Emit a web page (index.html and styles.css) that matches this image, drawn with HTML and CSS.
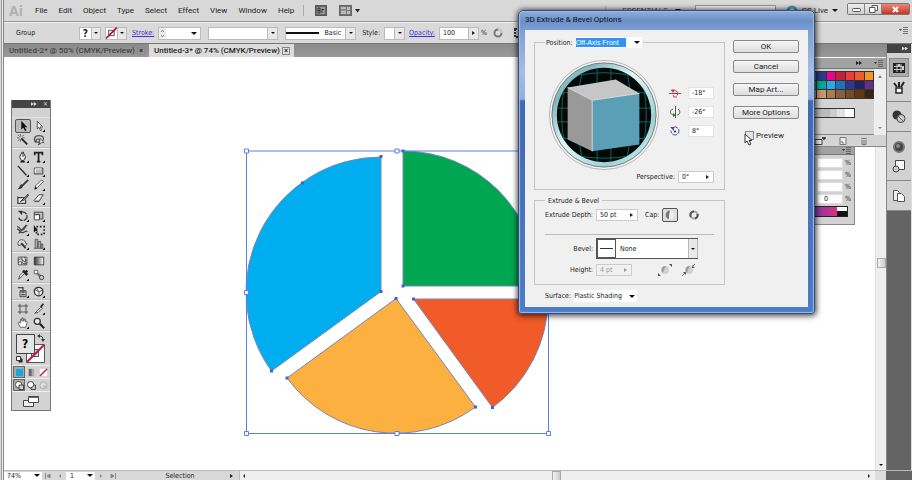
FILE: index.html
```
<!DOCTYPE html>
<html lang="en">
  <head>
    <meta charset="utf-8">
    <title>Untitled-3 - Illustrator</title>
    <link rel="stylesheet" href="styles.css">
  </head>
  <body>
    <header class="menubar">
      <span class="logo">Ai</span>
      <nav class="menu">
        <a href="#">File</a>
        <a href="#">Edit</a>
        <a href="#">Object</a>
        <a href="#">Type</a>
        <a href="#">Select</a>
        <a href="#">Effect</a>
        <a href="#">View</a>
        <a href="#">Window</a>
        <a href="#">Help</a>
      </nav>
      <div class="app_buttons">
        <button class="plain" aria-label="Bridge"><svg width="12" height="11" viewBox="0 0 12 11"><rect x=".5" y=".5" width="11" height="10" fill="#666" stroke="#555"/><rect x="2" y="2" width="8" height="7" fill="#999"/><path d="M3 3v5h2v-5zM3 5.500h2M7 8V4.500h2" fill="none" stroke="#333"/></svg></button>
        <button class="plain" aria-label="Arrange documents"><svg width="21" height="11" viewBox="0 0 21 11"><rect x=".5" y=".5" width="12" height="10" fill="#777" stroke="#666"/><path d="M2 2h5v7H2zM8 2h3v3H8zM8 6h3v3H8z" fill="#bbb"/><path d="M2 5h5" stroke="#666"/><path d="M16 4h5l-2.500 3.500z" fill="#222"/></svg></button>
      </div>
      <button class="workspace_name">ESSENTIALS <i class="arrow"></i></button>
      <input class="search" type="search" aria-label="Search">
      <button class="live"><svg width="12" height="12" viewBox="0 0 12 12"><circle cx="6" cy="6" r="4" fill="#eee" stroke="#3d9cab" stroke-width="3"/></svg>CS Live <i class="arrow"></i></button>
      <div class="window_buttons">
        <button aria-label="Minimize"><svg width="9" height="7" viewBox="0 0 9 7"><rect x=".5" y="2.500" width="8" height="3" rx="1" fill="#fff" stroke="#555"/></svg></button>
        <button aria-label="Restore"><svg width="9" height="8" viewBox="0 0 9 8"><path d="M3 .5h5.500v5H3z" fill="#fff" stroke="#555"/><path d="M.5 2.500H6v5H.5z" fill="#fff" stroke="#555"/></svg></button>
        <button class="quit" aria-label="Quit"><svg width="9" height="7" viewBox="0 0 9 7"><path d="M2 1l5 5M7 1L2 6" stroke="#fff" stroke-width="2"/></svg></button>
      </div>
    </header>

    <div class="control_bar">
      <span class="kind">Group</span>
      <button class="field paint" aria-label="Fill"><b>?</b><span class="drop"><i class="arrow"></i></span></button>
      <button class="field paint" aria-label="Stroke color"><svg width="12" height="12" viewBox="0 0 12 12"><rect x="3" y="3" width="6" height="6" fill="#fff" stroke="#444"/><path d="M0 12L12 0" stroke="#b01545" stroke-width="2"/></svg><span class="drop"><i class="arrow"></i></span></button>
      <a href="#">Stroke:</a>
      <label class="field stroke"><svg class="stepper" width="7" height="11" viewBox="0 0 7 11"><path d="M0 0h7v11H0z" fill="#eee"/><path d="M2 4l1.500-2L5 4M2 7l1.500 2L5 7" fill="none" stroke="#888"/></svg><select aria-label="Stroke weight"><option></option></select><i class="arrow"></i></label>
      <button class="field profile" aria-label="Width profile"><span class="drop"><i class="arrow"></i></span></button>
      <button class="field brush"><i class="line"></i>Basic<span class="drop"><i class="arrow"></i></span></button>
      <span>Style:</span>
      <button class="field style" aria-label="Graphic style"><span class="drop"><i class="arrow"></i></span></button>
      <a href="#">Opacity:</a>
      <label class="field opacity"><input value="100" aria-label="Opacity"><span class="drop"><i class="arrow right"></i></span></label>
      <span class="percent">%</span>
      <svg class="recolor" width="10" height="10" viewBox="0 0 10 10"><circle cx="5" cy="5" r="3.500" fill="#ddd" stroke="#777" stroke-width="2"/><path d="M5 1.500A3.500 3.500 0 0 1 8.500 5" fill="none" stroke="#ccc" stroke-width="2"/></svg>
      <svg width="10" height="10" viewBox="0 0 10 10"><path d="M1 1h8v8H1z" fill="none" stroke="#333" stroke-width="2" stroke-dasharray="2 1"/><path d="M4 4h3v3H4z" fill="#555"/></svg>
      <button class="plain panel_menu" aria-label="Panel menu"><svg width="9" height="7" viewBox="0 0 9 7"><path d="M0 2h3L1.500 4z" fill="#444"/><path d="M4 .5h5M4 2.500h5M4 4.500h5M4 6.500h5" stroke="#777"/></svg></button>
    </div>

    <main class="workspace">
      <div class="documents">
        <div class="tabs">
          <div class="tab"><a href="#">Untitled-2* @ 50% (CMYK/Preview)</a><button aria-label="Close">×</button></div>
          <div class="tab active"><a href="#">Untitled-3* @ 74% (CMYK/Preview)</a><button aria-label="Close">×</button></div>
        </div>
        <div class="canvas">
          <svg class="chart" width="310" height="291" viewBox="242 147 310 291">
            <g stroke="#7a87b4">
              <path fill="#00aeef" d="M381 157A135 135 0 0 0 271.500 371L381 291.500z"/>
              <path fill="#00a651" d="M403 151V286H538A135 135 0 0 0 403 151z"/>
              <path fill="#f15a29" d="M413.500 299H548A135 135 0 0 1 492.500 407.500z"/>
              <path fill="#fbb040" d="M396 298.500L475.500 407A134.500 134.500 0 0 1 287 378z"/>
            </g>
            <rect x="246.500" y="151" width="302" height="282.500" fill="none" stroke="#5c7fe0"/>
            <path fill="#3c62d8" d="M379.500 155h3v3h-3zM379.500 290h3v3h-3zM270 369.500h3v3h-3zM301 181.500h3v3h-3zM401.500 149.500h3v3h-3zM401.500 284.500h3v3h-3zM412 297.500h3v3h-3zM491 406h3v3h-3zM394.500 297h3v3h-3zM474 405.500h3v3h-3zM285.500 376.500h3v3h-3z"/>
            <path fill="#fff" stroke="#5c7fe0" d="M244.500 149h4v4h-4zM395 149h4v4h-4zM244.500 290.500h4v4h-4zM244.500 431.500h4v4h-4zM395 431.500h4v4h-4zM546.500 431.500h4v4h-4z"/>
          </svg>

          <aside class="toolbox">
            <div class="toolbox_title"><i class="fast"></i><i>×</i></div>
            <div class="grip"></div>
            <div class="tools">
              <button class="on" aria-label="Selection"><svg viewBox="0 0 14 14"><path d="M5 1v10l2.500-2 2 4 1.500-1-2-3.500h3z" fill="#111"/></svg></button>
              <button aria-label="Direct selection"><svg viewBox="0 0 14 14"><path d="M5 1.500v9l2-2 2 4 1-1-1.500-3.500h3z" fill="#fff" stroke="#444"/><path d="M14 11v3h-3z"/></svg></button>
              <button aria-label="Magic wand"><svg viewBox="0 0 14 14"><path d="M5 5l7 7" stroke="#222" stroke-width="2"/><path d="M4 0v3M4 6v3M0 4.500h3M6 4.500h3M1 1l2 2M8 1L6 3M1 8l2-2" stroke="#555"/></svg></button>
              <button aria-label="Lasso"><svg viewBox="0 0 14 14"><path d="M4 10C0 8 1 2 7 2s7 5 2 7-7-2-4-3 4 4 1 7" fill="none" stroke="#555" stroke-width="1.500"/><path d="M8 5v7l2-2h3z" fill="#fff" stroke="#444"/></svg></button>
            </div>
            <div class="tools">
              <button aria-label="Pen"><svg viewBox="0 0 14 14"><path d="M6 1L3 7l2 4h3l2-4-3-6v6" fill="#eee" stroke="#222"/><path d="M4 12.500h5" stroke="#222" stroke-width="2"/><path d="M14 11v3h-3z"/></svg></button>
              <button aria-label="Type"><svg viewBox="0 0 14 14"><path d="M2 5V2h9v3M6.500 2v10M4.500 12.500h4" fill="none" stroke="#222" stroke-width="2"/><path d="M14 11v3h-3z"/></svg></button>
              <button aria-label="Line"><svg viewBox="0 0 14 14"><path d="M1 1l10 11" stroke="#222" stroke-width="1.500"/><path d="M14 11v3h-3z"/></svg></button>
              <button aria-label="Rectangle"><svg viewBox="0 0 14 14"><path d="M1.500 3.500h10v7h-10z" fill="#bbb" stroke="#333"/><path d="M2.500 9V4.500H10" fill="none" stroke="#fff"/><path d="M14 11v3h-3z"/></svg></button>
              <button aria-label="Paintbrush"><svg viewBox="0 0 14 14"><path d="M13 1L6 8" stroke="#333" stroke-width="2"/><path d="M7 7c0 4-3 5-7 5 3-1 3-5 5-6z" fill="#333"/></svg></button>
              <button aria-label="Pencil"><svg viewBox="0 0 14 14"><path d="M2 12l1-4 7-7 2 2-7 7z" fill="#fff" stroke="#333"/><path d="M2 12l1-3 2 2zM14 11v3h-3z"/></svg></button>
              <button aria-label="Blob brush"><svg viewBox="0 0 14 14"><path d="M1 5.500h7M1 4v8h9V8" fill="#eee" stroke="#444" stroke-width="1.500"/><path d="M13 1L7 7 4 10l5-2 5-6" fill="#888" stroke="#333"/></svg></button>
              <button aria-label="Eraser"><svg viewBox="0 0 14 14"><path d="M1 9l6-7h5l-5 8H2z" fill="#eee" stroke="#333"/><path d="M2 9h5l4-6" fill="none" stroke="#888"/><path d="M14 11v3h-3z"/></svg></button>
            </div>
            <div class="tools">
              <button aria-label="Rotate"><svg viewBox="0 0 14 14"><path d="M4 3a5 5 0 1 1-2 6" fill="none" stroke="#444" stroke-width="1.500" stroke-dasharray="8 1"/><path d="M1 1h5v5z" fill="#333"/><path d="M14 11v3h-3z"/></svg></button>
              <button aria-label="Scale"><svg viewBox="0 0 14 14"><path d="M1.500 2.500h10v8h-4v-5h-6z" fill="#bbb" stroke="#333"/><path d="M1.500 5.500h6v6h-6z" fill="#fff" stroke="#333"/><path d="M14 11v3h-3z"/></svg></button>
              <button aria-label="Warp"><svg viewBox="0 0 14 14"><path d="M0 3c4 0 2 4 6 4s3-6 6-5M0 6c4 0 3 5 7 4s3-3 5-1M2 11L11 1" fill="none" stroke="#444" stroke-width="1.500"/><path d="M14 11v3h-3z"/></svg></button>
              <button aria-label="Free transform"><svg viewBox="0 0 14 14"><path d="M4 3h9v9H4z" fill="none" stroke="#222" stroke-width="2" stroke-dasharray="2 2"/><path d="M1 1v9l2-2 3 1z" fill="#111"/></svg></button>
              <button aria-label="Symbol sprayer"><svg viewBox="0 0 14 14"><path d="M1 7c0-7 9-6 9-1l2 1-3 3-2-3-5 2z" fill="#ddd" stroke="#444"/><path d="M5 6l5 6" stroke="#333" stroke-width="2"/><path d="M14 11v3h-3z"/></svg></button>
              <button aria-label="Graph"><svg viewBox="0 0 14 14"><path d="M2.500 12V1.500h3V12M6 12V4h3v8M9.500 12V7h2v5M1 12h11" fill="#aaa" stroke="#555"/><path d="M14 11v3h-3z"/></svg></button>
            </div>
            <div class="tools">
              <button aria-label="Mesh"><svg viewBox="0 0 14 14"><path d="M1.500 2.500h10v9h-10zM1 6q3-3 5 0t6 0M1 9q3-3 5 0t6 0M5 2q3 4 0 9M9 2q2 4 0 9" fill="#eee" stroke="#444"/></svg></button>
              <button aria-label="Gradient"><svg viewBox="0 0 14 14"><defs><linearGradient id="fade"><stop stop-color="#333"/><stop offset="1" stop-color="#fff"/></linearGradient></defs><path d="M1.500 2.500h11v9h-11z" fill="url(#fade)" stroke="#333"/></svg></button>
              <button aria-label="Eyedropper"><svg viewBox="0 0 14 14"><path d="M9 5l-7 7 1-4 5-5" fill="#fff" stroke="#333"/><path d="M7 2l5 5M10 4l2-2" stroke="#222" stroke-width="3"/><path d="M14 11v3h-3z"/></svg></button>
              <button aria-label="Blend"><svg viewBox="0 0 14 14"><path d="M1.500 1.500h4v4h-4z" fill="#fff" stroke="#555"/><path d="M5 5l4 4" stroke="#777" stroke-width="3"/><circle cx="10" cy="10" r="2.500" fill="#ccc" stroke="#333"/></svg></button>
            </div>
            <div class="tools">
              <button aria-label="Live paint"><svg viewBox="0 0 14 14"><path d="M3.500 5.500h7v7h-7z" fill="#ccc" stroke="#333"/><path d="M1 2h6v3M5 7h4M5 10h4" fill="none" stroke="#444" stroke-width="1.500"/><path d="M14 11v3h-3z"/></svg></button>
              <button aria-label="Perspective"><svg viewBox="0 0 14 14"><circle cx="6.500" cy="6.500" r="5" fill="#eee" stroke="#333" stroke-width="1.500"/><path d="M2 4l5 3 5-3M7 7v5M4 2l3 5" fill="none" stroke="#555"/><path d="M14 11v3h-3z"/></svg></button>
            </div>
            <div class="tools">
              <button aria-label="Artboard"><svg viewBox="0 0 14 14"><path d="M3.500 1v12M10.500 1v12M1 3.500h12M1 10.500h12" stroke="#444"/></svg></button>
              <button aria-label="Slice"><svg viewBox="0 0 14 14"><path d="M2 12L9 5l2 1-5 5z" fill="#fff" stroke="#333"/><path d="M9 5l3-4" stroke="#222" stroke-width="2"/><path d="M14 11v3h-3z"/></svg></button>
              <button aria-label="Hand"><svg viewBox="0 0 14 14"><path d="M4 12L1 7l1-1 2 1V3l1-1 1 3V1h1l1 4 1-3 1 1v3l1-1 1 1-2 6z" fill="#fff" stroke="#555"/><path d="M14 11v3h-3z"/></svg></button>
              <button aria-label="Zoom"><svg viewBox="0 0 14 14"><circle cx="5" cy="5" r="3.500" fill="#eee" stroke="#333" stroke-width="1.500"/><path d="M8 8l5 5" stroke="#222" stroke-width="2.500"/></svg></button>
            </div>
            <svg class="fill_stroke" width="32" height="33" viewBox="0 0 32 33">
              <path d="M11.500 12.500h18v18h-18z" fill="#fff" stroke="#555"/><path d="M16.500 17.500h7v7h-7z" fill="#ddd" stroke="#555"/>
              <path d="M12 30L29 13" stroke="#c01543" stroke-width="2"/>
              <path d="M1.500 2.500h18v19h-18z" fill="#e4e4e4" stroke="#444"/>
              <text x="7" y="16">?</text>
              <path d="M24 4c3 0 4 1 4 4" fill="none" stroke="#333"/><path d="M22 4l3-2v4zM28 10l-2-3h4z" fill="#333"/>
              <path d="M3.500 26.500h4v4h-4z" fill="#222"/><path d="M1.500 24.500h4v4h-4z" fill="#fff" stroke="#333"/>
            </svg>
            <div class="modes">
              <button class="on" aria-label="Color"><svg viewBox="0 0 10 10"><path d="M1 1h8v8H1z" fill="#19a5e0"/></svg></button>
              <button aria-label="Gradient fill"><svg viewBox="0 0 10 10"><path d="M2 1h6v8H2z" fill="#aaa"/><path d="M2 1h3v8H2z" fill="#666"/></svg></button>
              <button aria-label="None"><svg viewBox="0 0 10 10"><path d="M1 1h8v8H1z" fill="#fff"/><path d="M1 9l8-8" stroke="#c01543" stroke-width="1.500"/></svg></button>
            </div>
            <div class="modes">
              <button class="on" aria-label="Draw normal"><svg viewBox="0 0 10 10"><circle cx="4" cy="4" r="3.500" fill="#fff" stroke="#444"/><path d="M4.500 4.500h5v5h-5z" fill="#ccc" stroke="#333"/></svg></button>
              <button aria-label="Draw behind"><svg viewBox="0 0 10 10"><path d="M4.500 4.500h5v5h-5z" fill="#ccc" stroke="#333"/><circle cx="4" cy="4" r="3.500" fill="#fff" stroke="#333"/></svg></button>
              <button aria-label="Draw inside"><svg viewBox="0 0 10 10"><circle cx="5" cy="5" r="4" fill="#ddd" stroke="#aaa"/><path d="M5 5h3v3H5z" fill="#bbb"/></svg></button>
            </div>
            <button class="screen_mode" aria-label="Screen mode"><svg width="16" height="11" viewBox="0 0 16 11"><path d="M.5 4.500h10v6H.5z" fill="#eee" stroke="#444"/><path d="M5.500.5h10v6h-10z" fill="#fff" stroke="#444"/><path d="M5 1.500h10" stroke="#666"/></svg></button>
          </aside>

          <aside class="panels">
            <section class="swatches">
              <div class="panel_title"><i class="fast"></i><svg width="9" height="7" viewBox="0 0 9 7"><path d="M0 2h3L1.500 4z" fill="#333"/><path d="M4 .5h5M4 2.500h5M4 4.500h5M4 6.500h5" stroke="#666"/></svg></div>
              <div class="swatch_area">
                <div class="swatch_list">
                  <div class="grid">
                    <i class="c_blue"></i><i class="c_navy"></i><i class="c_magenta"></i><i class="c_crimson"></i><i class="c_red"></i><i class="c_orange"></i><i class="c_amber"></i>
                    <i class="c_green"></i><i class="c_teal"></i><i class="c_sky"></i><i class="c_blue"></i><i class="c_navy"></i><i class="c_indigo"></i><i class="c_purple"></i>
                    <i class="c_sand"></i><i class="c_sand"></i><i class="c_tan"></i><i class="c_brown"></i><i class="c_umber"></i><i class="c_coffee"></i><i class="c_dark"></i>
                  </div>
                  <div class="grays"></div>
                </div>
                <div class="swatch_scroll"><i class="arrow up"></i><i class="arrow"></i></div>
              </div>
              <div class="panel_foot">
                <svg width="12" height="8" viewBox="0 0 12 8"><path d="M1 2.500h7v5H1z" fill="#eee" stroke="#444"/><path d="M8 1h4M10 0v3" stroke="#333" stroke-width="1.500"/></svg>
                <svg width="8" height="8" viewBox="0 0 8 8"><path d="M1 .5h6v7H1zM1 5h3v3" fill="#eee" stroke="#777"/></svg>
                <svg width="8" height="8" viewBox="0 0 8 8"><path d="M1 1.500h6M2 3v4.500h4V3M4 3v4" fill="none" stroke="#777"/></svg>
              </div>
            </section>
            <section class="color_panel">
              <div class="panel_title"><svg width="9" height="7" viewBox="0 0 9 7"><path d="M0 2h3L1.500 4z" fill="#333"/><path d="M4 .5h5M4 2.500h5M4 4.500h5M4 6.500h5" stroke="#666"/></svg></div>
              <label><input aria-label="Cyan">%</label>
              <label><input aria-label="Magenta">%</label>
              <label><input aria-label="Yellow">%</label>
              <label><input aria-label="Black" value="0">%</label>
              <div class="spectrum"><i></i></div>
            </section>
          </aside>

          <div class="vscroll"><i class="thumb"></i><i class="arrow"></i></div>
        </div>
      </div>
      <div class="dock">
        <div class="dock_title"><i class="fast"></i></div>
        <div class="dock_group">
          <button class="on" aria-label="Swatches"><svg viewBox="0 0 14 14"><path d="M1 2h12v10H1z" fill="#222"/><path d="M2 5.500h10M2 8.500h10M5 3v8M9 3v8" stroke="#ccc"/><path d="M6 3h2v2H6zM10 6h2v2h-2z" fill="#ccc"/></svg></button>
          <button aria-label="Brushes"><svg viewBox="0 0 14 14"><path d="M4 8h6v5H4z" fill="#fff" stroke="#222" stroke-width="1.500"/><path d="M7 7V2M5 7L2 3M9 7l3-5" stroke="#222" stroke-width="2"/></svg></button>
        </div>
        <div class="dock_group">
          <button aria-label="Color guide"><svg viewBox="0 0 14 14"><circle cx="5" cy="5" r="4.500" fill="#333"/><circle cx="9" cy="8.500" r="4" fill="#ccc" stroke="#444"/><path d="M6 6l5 5" stroke="#666"/></svg></button>
        </div>
        <div class="dock_group">
          <button aria-label="Appearance"><svg viewBox="0 0 14 14"><circle cx="7" cy="7" r="5" fill="#444" stroke="#777" stroke-width="2"/><circle cx="6" cy="6" r="2" fill="#888"/></svg></button>
          <button aria-label="Graphic styles"><svg viewBox="0 0 14 14"><path d="M3.500 1.500h9v9h-9z" fill="#fff" stroke="#444"/><circle cx="4" cy="10" r="3" fill="#ccc" stroke="#444"/></svg></button>
        </div>
        <div class="dock_group">
          <button aria-label="Layers"><svg viewBox="0 0 14 14"><path d="M1.500 1.500h4l2 2v8h-6z" fill="#eee" stroke="#555"/><path d="M5.500 4.500h4l3 3v5h-7z" fill="#fff" stroke="#555"/></svg></button>
        </div>
      </div>
    </main>

    <footer class="status">
      <label class="pick zoom"><select aria-label="Zoom level"><option>74%</option></select><i class="arrow"></i></label>
      <button class="plain" aria-label="First"><svg width="6" height="6" viewBox="0 0 6 6"><path d="M.5 0v6M5 1L2 3l3 2z" fill="#888" stroke="#888"/></svg></button>
      <button class="plain" aria-label="Previous"><svg width="6" height="6" viewBox="0 0 6 6"><path d="M4 1L2 3l2 2z" fill="#888"/></svg></button>
      <label class="pick page"><select aria-label="Artboard"><option>1</option></select><i class="arrow"></i></label>
      <button class="plain" aria-label="Next"><svg width="6" height="6" viewBox="0 0 6 6"><path d="M2 1l2 2-2 2z" fill="#888"/></svg></button>
      <button class="plain" aria-label="Last"><svg width="6" height="6" viewBox="0 0 6 6"><path d="M5.500 0v6M1 1l3 2-3 2z" fill="#888" stroke="#888"/></svg></button>
      <span class="tool_name">Selection</span>
      <i class="arrow right play"></i>
      <div class="hscroll"><i class="arrow left"></i><i class="thumb"></i><i class="arrow right"></i></div>
      <span class="corner"></span>
    </footer>

    <div class="dialog" role="dialog" aria-labelledby="dialog_title">
      <div class="dialog_title" id="dialog_title">3D Extrude &amp; Bevel Options</div>
      <form class="dialog_body">
        <div class="settings">
          <fieldset class="rotation">
            <legend><label for="position">Position:</label><span class="pick position"><select id="position"><option>Off-Axis Front</option></select><i class="arrow"></i></span></legend>
            <div class="track">
              <svg width="114" height="113" viewBox="0 0 114 113">
                <defs>
                  <linearGradient id="ring" x2="1" y2="1"><stop stop-color="#a9d6d8"/><stop offset=".2" stop-color="#7fb9bd"/><stop offset=".45" stop-color="#e2f8f9"/><stop offset=".75" stop-color="#9bd3d6"/><stop offset="1" stop-color="#dff5f5"/></linearGradient>
                  <clipPath id="disc"><circle cx="57" cy="57" r="48"/></clipPath>
                </defs>
                <circle cx="57" cy="57" r="55.500" fill="#f4f4f4" stroke="#b5b5b5"/>
                <circle cx="57" cy="57" r="53" fill="url(#ring)" stroke="#777"/>
                <circle cx="57" cy="57" r="48" fill="#020808"/>
                <g clip-path="url(#disc)" fill="none" stroke="#14655b">
                  <path d="M9 22q48-16 96 0M9 36q48-12 96 0M5 50h104M5 64h104M9 79q48 12 96 0M9 93q48 16 96 0"/>
                  <path d="M22 5q-16 52 0 104M36 5q-12 52 0 104M50 5v104M64 5v104M79 5q12 52 0 104M92 5q16 52 0 104"/>
                </g>
                <path d="M20 29L69 21 93 35 45 42z" fill="#c6c6c6"/>
                <path d="M20 29L45 42V94L20 82z" fill="#999"/>
                <path d="M45 42L93 35V87L45 94z" fill="#5b9fb6"/>
                <path d="M20 29L45 42 93 35M45 42V94" fill="none" stroke="#ddd"/>
              </svg>
              <div class="angles">
                <label><svg width="12" height="12" viewBox="0 0 12 12"><path d="M0 6.500h12" stroke="#944"/><path d="M3 4.500a3 2.500 0 1 1 5 4M4 8l1 2h3" fill="none" stroke="#d43c4c"/><path d="M1.500 3l4-1-1 4z" fill="#d43c4c"/></svg><input aria-label="Rotate around X" value="-18°"></label>
                <label><svg width="12" height="12" viewBox="0 0 12 12"><path d="M6.500 0v12" stroke="#465"/><path d="M4 3C0 4 1 9 5 9M9 3c3 2 2 6-1 6" fill="none" stroke="#486650"/><path d="M4 7l3 2-3 2z" fill="#486650"/></svg><input aria-label="Rotate around Y" value="-26°"></label>
                <label><svg width="12" height="12" viewBox="0 0 12 12"><path d="M4 2.500a4 4 0 1 1-2 3" fill="none" stroke="#4946c8" stroke-dasharray="5 1"/><path d="M1 2h4v4z" fill="#4946c8"/><circle cx="6" cy="6.500" r="1" fill="#223"/></svg><input aria-label="Rotate around Z" value="8°"></label>
              </div>
            </div>
            <div class="row perspective"><label for="perspective">Perspective:</label><span class="number"><input id="perspective" value="0°"><i class="arrow right"></i></span></div>
          </fieldset>

          <fieldset class="extrude">
            <legend>Extrude &amp; Bevel</legend>
            <div class="row">
              <label class="name" for="depth">Extrude Depth:</label><span class="number depth"><input id="depth" value="50 pt"><i class="arrow right"></i></span>
              <span class="cap">Cap:</span>
              <button type="button" class="cap_on" aria-label="Cap on"><svg width="10" height="10" viewBox="0 0 10 10"><circle cx="5" cy="5" r="4.500" fill="#eee"/><path d="M5 .5a4.500 4.500 0 0 0-1 8.800L4 5z" fill="#777"/></svg></button>
              <button type="button" class="plain" aria-label="Cap off"><svg width="10" height="10" viewBox="0 0 10 10"><circle cx="5" cy="5" r="3.500" fill="#eee" stroke="#aaa" stroke-width="2"/><path d="M5 1.500A3.500 3.500 0 0 0 2 7M8.500 4A3.500 3.500 0 0 1 6 8.500" fill="none" stroke="#555" stroke-width="2"/></svg></button>
            </div>
            <hr>
            <div class="row bevel_row">
              <label class="name" for="bevel">Bevel:</label>
              <span class="bevel"><i class="sample"></i><select id="bevel"><option>None</option></select><span class="drop"><i class="arrow"></i></span></span>
            </div>
            <div class="row height_row">
              <label class="name" for="height">Height:</label><span class="number height"><input id="height" value="4 pt" disabled><i class="arrow right"></i></span>
              <button type="button" class="plain out" aria-label="Bevel extent out" disabled><svg width="14" height="12" viewBox="0 0 14 12"><circle cx="7" cy="6" r="4" fill="#d0d0d0"/><path d="M8 2a4 4 0 0 0-3 7c1-3 1-4 3-7z" fill="#999"/><path d="M11 0h3v3zM0 9v3h3z" fill="#555"/></svg></button>
              <button type="button" class="plain" aria-label="Bevel extent in" disabled><svg width="14" height="12" viewBox="0 0 14 12"><circle cx="7" cy="6" r="4" fill="#d0d0d0"/><path d="M8 2a4 4 0 0 0-3 7c1-3 1-4 3-7z" fill="#999"/><path d="M10 1v3h3zM1 8h3v3z" fill="#555"/><path d="M13 0l-3 3M0 12l3-3" stroke="#777"/></svg></button>
            </div>
          </fieldset>

          <div class="row surface_row"><label for="surface">Surface:</label><span class="pick surface"><select id="surface"><option>Plastic Shading</option></select><i class="arrow"></i></span></div>
        </div>

        <div class="actions">
          <button type="button">OK</button>
          <button type="button">Cancel</button>
          <button type="button" class="later">Map Art...</button>
          <button type="button" class="later">More Options</button>
          <label class="preview"><input type="checkbox">Preview
            <svg class="cursor" width="9" height="13" viewBox="0 0 9 13"><path d="M1 1v9l2-2 2 4 2-1-2-3.500h3z" fill="#fff" stroke="#333"/></svg>
          </label>
        </div>
      </form>
    </div>
  </body>
</html>
```

FILE: styles.css
```
* { box-sizing: border-box; }

body {
  margin: 0;
  padding-left: 4px;
  height: 100vh;
  display: flex;
  flex-direction: column;
  overflow: hidden;
  position: relative;
  background: linear-gradient(90deg, #d8d8d8 1px, #999 1px, #999 2px, #eee 2px, #eee 3px, #888 3px, #888 4px, #d6d6d6 4px);
  font-family: "DejaVu Sans Condensed", "DejaVu Sans", sans-serif;
  font-size: 7px;
  color: #222;
}

button, input, select {
  font: inherit;
  color: inherit;
  margin: 0;
  padding: 0;
  border: none;
  background: none;
  border-radius: 0;
  appearance: none;
  outline: none;
  min-width: 0;
}

svg { display: block; }

.arrow {
  width: 0;
  height: 0;
  flex: none;
  border: 3px solid transparent;
  border-top: 3px solid #111;
  border-bottom: none;
}
.arrow.right { border: 2px solid transparent; border-left: 3px solid #222; border-right: none; }
.arrow.left { border: 2px solid transparent; border-right: 3px solid #222; border-left: none; }

/* two small triangles used in panel titles */
.fast { width: 6px; height: 4px; background: #ddd; clip-path: polygon(0 0, 50% 50%, 50% 0, 100% 50%, 50% 100%, 50% 50%, 0 100%); }

.menubar {
  height: 22px;
  flex: none;
  display: flex;
  align-items: center;
  padding-left: 5px;
  background: #d8d8d8;
  border-bottom: 1px solid #999;
  font-family: Roboto, sans-serif;
  font-size: 8px;
}
.logo { width: 26px; font-size: 14px; font-weight: bold; color: #b0b0b0; font-family: "Open Sans", sans-serif; }
.menu { display: flex; gap: 11px; }
.menu a { color: #222; text-decoration: none; }
.app_buttons { display: flex; gap: 12px; margin-left: 9px; padding-left: 11px; border-left: 1px solid #aaa; }
.workspace_name { margin-left: auto; padding-left: 16px; display: flex; align-items: center; gap: 7px; color: #444; border-left: 1px solid #bbb; }
.search { width: 81px; height: 12px; margin: 0 10px 0 14px; background: #eee; border: 1px solid #999; }
.live { display: flex; align-items: center; gap: 4px; }
.window_buttons { display: flex; margin: 0 2px 3px 9px; border: 1px solid #777; border-radius: 2px; }
.window_buttons button { width: 17px; height: 10px; display: flex; align-items: center; justify-content: center; border-right: 1px solid #888; background: linear-gradient(#eee, #ccc); }
.window_buttons .quit { width: 27px; border: none; background: linear-gradient(#e58a7c, #c83424); }

.control_bar {
  height: 22px;
  flex: none;
  display: flex;
  align-items: center;
  gap: 4px;
  padding-left: 12px;
  background: #d9d9d9;
  border-top: 1px solid #eee;
  border-bottom: 1px solid #777;
}
.control_bar a { color: #3a35d0; }
.kind { width: 59px; }
.field { height: 13px; display: flex; align-items: center; justify-content: center; background: #fff; border: 1px solid #bbb; }
.drop { width: 10px; height: 100%; margin-left: auto; display: flex; align-items: center; justify-content: center; background: #e8e8e8; border-left: 1px solid #bbb; }
.drop .arrow { border-width: 2px; border-bottom: none; }
.drop .arrow.right { border-width: 2px 0 2px 3px; border-bottom: 2px solid transparent; }
.paint { width: 22px; }
.paint b { width: 12px; font-size: 10px; }
.paint + a { margin-left: 1px; }
.stroke { width: 43px; padding-right: 3px; }
.stroke select { flex: 1; }
.profile { width: 70px; margin-left: 3px; }
.brush { width: 71px; margin-left: 3px; }
.brush .line { flex: 1; height: 2px; margin-right: 5px; background: #111; }
.brush .drop, .style .drop { margin-left: 4px; }
.style { width: 21px; justify-content: flex-end; }
.brush + span { margin-left: 2px; }
.opacity { width: 40px; padding-left: 3px; }
.opacity input { flex: 1; width: 0; }
.opacity + .percent { margin-left: -2px; }
.recolor { margin: 0 7px 0 2px; }
.panel_menu { margin: 0 4px 0 auto; padding-bottom: 6px; }

.workspace { flex: 1; display: flex; min-height: 0; }
.documents { flex: 1; display: flex; flex-direction: column; min-width: 0; }
.tabs { height: 13px; flex: none; display: flex; background: linear-gradient(#8a8a8a, #999); font: 500 8px Roboto, sans-serif; }
.tab { width: 145px; padding: 0 4px 0 5px; display: flex; align-items: center; justify-content: space-between; }
.tab a { color: #444; text-decoration: none; white-space: nowrap; }
.tab button { width: 8px; height: 8px; border: 1px solid #888; line-height: 6px; font-size: 7px; }
.tab.active { background: #dcdcdc; }
.tab.active a { color: #222; }

.canvas { flex: 1; position: relative; background: #fff; display: flex; justify-content: flex-end; }
.chart { position: absolute; left: 238px; top: 90px; }

.toolbox {
  position: absolute;
  left: 7px;
  top: 43px;
  width: 40px;
  background: #d2d2d2;
  border: 1px solid #777;
  border-top: none;
}
.toolbox_title { height: 8px; display: flex; align-items: center; justify-content: flex-end; gap: 6px; padding-right: 2px; background: #444; color: #ddd; line-height: 8px; }
.toolbox_title i { font-style: normal; }
.grip { height: 10px; border-bottom: 1px solid #e2e2e2; }
.tools { display: grid; grid-template-columns: 16px 16px; padding: 1px 3px; border-bottom: 1px solid #eee; box-shadow: inset 0 -1px #bbb; }
.tools button { height: 14px; display: flex; align-items: center; justify-content: center; }
.tools svg { width: 12px; height: 12px; }
.tools .on { background: #bbb; border: 1px solid #555; border-radius: 2px; }
.fill_stroke { margin: 0 3px; font-size: 12px; font-weight: bold; }
.modes { display: flex; justify-content: center; padding: 0 1px; height: 13px; border-top: 1px solid #eee; }
.modes button { width: 12px; display: flex; align-items: center; justify-content: center; }
.modes svg { width: 9px; height: 9px; }
.modes .on { background: #aaa; border: 1px solid #666; }
.screen_mode { width: 100%; height: 19px; display: flex; align-items: center; justify-content: center; border-top: 1px solid #eee; }

.panels { position: absolute; right: 0; top: 1px; width: 96px; z-index: 1; }
.panel_title { height: 11px; display: flex; align-items: center; justify-content: flex-end; gap: 12px; padding-right: 3px; background: #a2a2a2; border-bottom: 1px solid #777; }
.panel_title .fast { background: #222; }
.swatches { background: #d4d4d4; border-bottom: 1px solid #888; }
.swatch_area { display: flex; height: 66px; }
.swatch_list { flex: 1; padding-top: 2px; border-bottom: 1px solid #888; }
.grid { display: grid; grid-template-columns: repeat(7, 1fr); width: 66px; margin-left: auto; background: #333; gap: 1px; padding: 1px 1px 1px 0; }
.grid i { height: 8px; }
.grays { width: 50px; height: 10px; margin: 9px 19px 0 auto; border: 1px solid #333; background: linear-gradient(90deg, #bbb 50%, #ccc 50%, #ccc 65%, #e2e2e2 65%, #e2e2e2 82%, #fff 82%); }
.swatch_scroll { width: 12px; display: flex; flex-direction: column; align-items: center; justify-content: space-between; padding: 6px 0; background: #eee; }
.swatch_scroll .arrow { border-width: 2px; border-bottom: none; border-top-color: #888; }
.swatch_scroll .up { border-top: none; border-bottom: 3px solid #888; }
.panel_foot { height: 11px; display: flex; align-items: center; justify-content: flex-end; gap: 13px; padding-right: 18px; }

.c_blue { background: #1c75bc; }
.c_navy { background: #2b3990; }
.c_magenta { background: #ec008c; }
.c_crimson { background: #c4203a; }
.c_red { background: #ee3d36; }
.c_orange { background: #f15a29; }
.c_amber { background: #f7941d; }
.c_green { background: #00a651; }
.c_teal { background: #00a79d; }
.c_sky { background: #27aae1; }
.c_indigo { background: #262262; }
.c_purple { background: #662d91; }
.c_sand { background: #c49a6c; }
.c_tan { background: #a97c50; }
.c_brown { background: #8b5e3c; }
.c_umber { background: #754c29; }
.c_coffee { background: #603913; }
.c_dark { background: #3c2415; }

.color_panel { width: 65px; padding-bottom: 7px; background: #d2d2d2; border: 1px solid #888; border-width: 0 1px 1px 0; display: flex; flex-direction: column; }
.color_panel .panel_title { height: 8px; margin-bottom: 2px; }
.color_panel label { height: 12px; display: flex; align-items: center; justify-content: flex-end; gap: 2px; padding-right: 3px; }
.color_panel input { width: 26px; height: 10px; padding-left: 6px; background: #fff; border: 1px solid #ddd; }
.spectrum { height: 11px; margin: 1px 6px 0 0; border: 1px solid #222; background: linear-gradient(90deg, #3058b0, #9038a0 50%, #e0307c 85%); display: flex; justify-content: flex-end; }
.spectrum i { width: 10px; background: linear-gradient(#fff 50%, #111 50%); }

.vscroll { width: 11px; display: flex; flex-direction: column; align-items: center; justify-content: space-between; padding: 201px 0 4px; background: #efefef; border-left: 1px solid #ddd; }
.thumb { background: linear-gradient(90deg, #f4f4f4, #ccc); border: 1px solid #aaa; width: 9px; height: 10px; }
.vscroll .arrow, .hscroll .arrow { border-width: 2px; }
.vscroll .arrow { border-bottom: none; }

.dock { width: 26px; flex: none; background: #646464; border-right: 1px solid #ddd; border-left: 1px solid #888; }
.dock_title { height: 9px; display: flex; align-items: center; justify-content: flex-end; padding-right: 3px; background: #444; }
.dock_group { padding: 5px 0; background: #d2d2d2; border-bottom: 1px solid #888; display: flex; flex-direction: column; align-items: center; }
.dock_group button { width: 20px; height: 19px; display: flex; align-items: center; justify-content: center; }
.dock_group svg { width: 14px; height: 14px; }
.dock_group .on { background: #aaa; border: 1px solid #888; }

.status { height: 10px; flex: none; display: flex; align-items: center; background: #d8d8d8; border-top: 1px solid #bbb; }
.pick { display: flex; align-items: center; background: #fff; padding-right: 2px; }
.pick select { flex: 1; }
.zoom { width: 38px; padding-left: 3px; }
.page { width: 29px; padding-left: 4px; }
.status .plain { width: 12px; display: flex; justify-content: center; }
.tool_name { width: 108px; padding-left: 14px; text-align: center; }
.play { margin: 0 6px 0 3px; }
.hscroll { flex: 1; height: 100%; display: flex; align-items: center; justify-content: space-between; padding: 0 5px 0 3px; background: #efefef; border-left: 1px solid #bbb; }
.corner { width: 37px; height: 100%; background: linear-gradient(90deg, #ddd 11px, #646464 11px); }

.dialog {
  position: absolute;
  left: 518px;
  top: 10px;
  width: 297px;
  padding: 0 6px 6px;
  border: 1px solid #3a4c70;
  border-radius: 5px 5px 3px 3px;
  background: linear-gradient(#8faedc 0, #6a90ca 10px, #7f9fd2 20px, #a4bde2 60px, #8fb0e0 88px, #3f69b0 90px, #4c7cc8 100%);
  box-shadow: 0 0 5px 1px #0008, 1px 2px 7px #0006, inset 0 0 1px 1px #9fbbe8;
  z-index: 5;
}
.dialog_title { height: 19px; font: 8px/18px Roboto, sans-serif; color: #111; }
.dialog_body { display: flex; gap: 8px; padding: 7px 9px 5px; background: #f0f0f0; }
.settings { width: 191px; }
fieldset { margin: 0; min-width: 0; padding: 0 10px; border: 1px solid #c4c4c4; }
legend { height: 11px; padding: 0 1px; display: flex; align-items: center; gap: 3px; }
.position { width: 66px; height: 11px; }
.position select { background: #3194f4; color: #fff; height: 9px; margin-right: 8px; font-family: "Liberation Sans", sans-serif; }
.track { display: flex; gap: 9px; margin: 10px 0 0 3px; }
.angles { display: flex; flex-direction: column; gap: 7px; padding-top: 29px; }
.angles label { display: flex; align-items: center; gap: 7px; }
.angles input { width: 26px; height: 12px; padding-left: 3px; background: #fff; border: 1px solid #e4e4e4; }
.row { display: flex; align-items: center; gap: 3px; height: 12px; }
.perspective { justify-content: flex-end; margin-bottom: 6px; }
.number { width: 36px; height: 12px; display: flex; align-items: center; padding: 0 4px 0 3px; background: #fff; border: 1px solid #ccc; }
.number input { flex: 1; width: 0; }

.extrude { margin-top: 5px; padding-bottom: 8px; }
.extrude legend { padding: 0 3px; }
.name { width: 48px; text-align: right; white-space: nowrap; flex: none; }
.extrude .row:first-of-type { margin-top: 3px; }
.depth { width: 42px; }
.cap { margin-left: 4px; }
.cap_on { width: 16px; height: 14px; margin: 0 8px 0 0; display: flex; align-items: center; justify-content: center; border: 1px solid #555; border-radius: 2px; background: #ddd; }
hr { margin: 13px 0 3px; border: none; border-top: 1px solid #bbb; }
.bevel_row { height: 21px; }
.bevel { width: 102px; height: 21px; display: flex; background: #fff; border: 1px solid #555; border-right: none; }
.bevel .sample { width: 19px; display: flex; align-items: center; padding: 0 2px; border: 1px solid #555; }
.bevel .sample::before { content: ""; flex: 1; height: 1px; background: #333; }
.bevel select { flex: 1; padding-left: 4px; }
.bevel .drop { border-right: 1px solid #bbb; }
.height_row { margin-top: 5px; }
.height { background: #f0f0f0; color: #999; }
.height .arrow { border-left-color: #999; }
.out { margin: 0 7px 0 23px; }
.surface_row { margin-top: 5px; padding-left: 11px; }
.surface { width: 63px; height: 12px; }

.actions { flex: 1; display: flex; flex-direction: column; gap: 7px; padding-top: 3px; font: 8px/11px Roboto, sans-serif; }
.actions button { width: 66px; height: 13px; border: 1px solid #888; border-radius: 2px; background: linear-gradient(#f6f6f6, #ddd); line-height: 10px; }
.actions .later { margin-top: 3px; }
.preview { position: relative; display: flex; align-items: center; gap: 2px; margin: 4px 0 0 12px; }
.preview input { width: 9px; height: 9px; border: 1px solid #888; background: #e4e4e4; }
.cursor { position: absolute; left: -1px; top: 3px; }
```
